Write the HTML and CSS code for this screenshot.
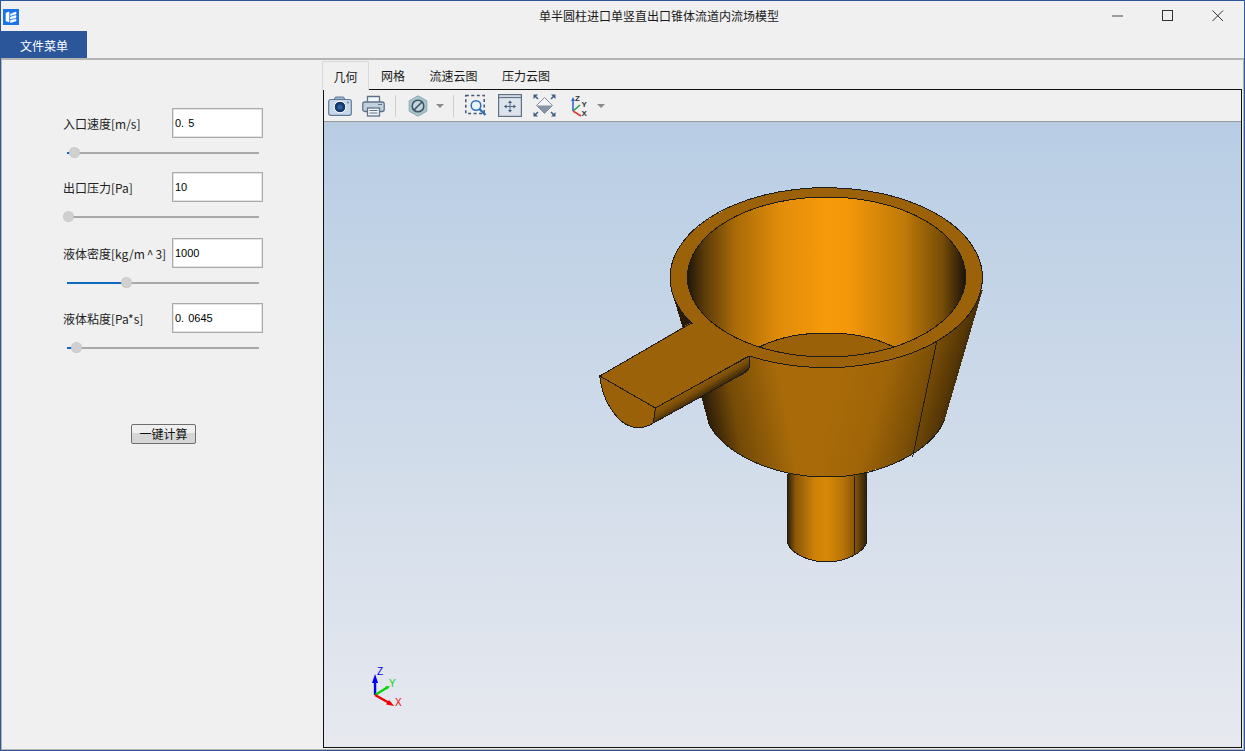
FILE: index.html
```html
<!DOCTYPE html>
<html lang="zh">
<head>
<meta charset="utf-8">
<title>单半圆柱进口单竖直出口锥体流道内流场模型</title>
<link rel="stylesheet" href="styles.css">
</head>
<body>
<div class="window">
  <header class="titlebar">
    <div class="app-icon">
      <svg width="16" height="16" viewBox="0 0 16 16">
        <rect width="16" height="16" fill="#1a73e8"/>
        <path d="M3 4v8M3 4l3-1v10l-3-1M7.500 5l5.500-2v2l-5.500 1.500zM7.500 8l5.500-1.500v2l-5.500 1.500zM7.500 11.500l5.500-1.500v2l-5.500 1.500z" fill="#fff" stroke="#fff" stroke-width=".6"/>
      </svg>
    </div>
    <div class="title">单半圆柱进口单竖直出口锥体流道内流场模型</div>
    <div class="win-controls">
      <button class="win-btn"><svg width="12" height="12" viewBox="0 0 12 12"><path d="M0 6h11" stroke="#777" stroke-width="1.400"/></svg></button>
      <button class="win-btn"><svg width="12" height="12" viewBox="0 0 12 12"><rect x=".5" y=".5" width="10" height="10" fill="none" stroke="#333"/></svg></button>
      <button class="win-btn"><svg width="12" height="12" viewBox="0 0 12 12"><path d="M.5 .5l10.500 10.500M11 .5L.5 11" stroke="#333" stroke-width="1"/></svg></button>
    </div>
  </header>
  <nav class="menubar"><div class="menu-item">文件菜单</div></nav>
  <main class="content">
    <aside class="side">
      <div class="form">
        <section class="field">
          <div class="field-row"><label class="field-label">入口速度[m/s]</label><input class="field-input wide" value="0. 5"></div>
          <div class="slider"><div class="fill" style="width:7px"></div><div class="knob" style="left:7px"></div></div>
        </section>
        <section class="field">
          <div class="field-row"><label class="field-label">出口压力[Pa]</label><input class="field-input" value="10"></div>
          <div class="slider"><div class="fill" style="width:0"></div><div class="knob" style="left:1px"></div></div>
        </section>
        <section class="field">
          <div class="field-row"><label class="field-label">液体密度[kg/m<span class="caret-char">^</span>3]</label><input class="field-input" value="1000"></div>
          <div class="slider"><div class="fill" style="width:59px"></div><div class="knob" style="left:59px"></div></div>
        </section>
        <section class="field">
          <div class="field-row"><label class="field-label">液体粘度[Pa*s]</label><input class="field-input wide" value="0. 0645"></div>
          <div class="slider"><div class="fill" style="width:9px"></div><div class="knob" style="left:9px"></div></div>
        </section>
      </div>
      <div class="action"><button class="run-btn">一键计算</button></div>
    </aside>
    <section class="workspace">
      <div class="tabs">
        <div class="tab active">几何</div>
        <div class="tab">网格</div>
        <div class="tab">流速云图</div>
        <div class="tab">压力云图</div>
      </div>
      <div class="viewer">
        <div class="toolbar">
          <svg class="tool" width="24" height="20" viewBox="0 0 24 20">
            <rect x=".7" y="3.500" width="22.600" height="15.800" rx="2" fill="#c9d8ea" stroke="#5c7a9c" stroke-width="1.200"/>
            <path d="M6 3.500l1.500-2.500h8l1.500 2.500z" fill="#9db4cd" stroke="#5c7a9c"/>
            <circle cx="12" cy="11" r="5.800" fill="#16386b" stroke="#fff" stroke-width="1"/>
            <circle cx="12" cy="11" r="2.600" fill="#2b5fa0"/>
            <circle cx="20" cy="6.500" r=".9" fill="#5c7a9c"/>
          </svg>
          <svg class="tool print" width="23" height="22" viewBox="0 0 23 22">
            <path d="M5.500 7V1.500h12V7" fill="#f4f7fa" stroke="#5f7186" stroke-width="1.300"/>
            <rect x=".8" y="7" width="21.400" height="9.500" rx="2" fill="#c3d0de" stroke="#5f7186" stroke-width="1.300"/>
            <rect x="5.500" y="13" width="12" height="8" fill="#f4f7fa" stroke="#5f7186" stroke-width="1.300"/>
            <path d="M7.500 15.500h8M7.500 18h8" stroke="#5f7186"/>
            <path d="M16 9.500h4" stroke="#5f7186"/>
          </svg>
          <span class="sep"></span>
          <svg class="tool hex" width="20" height="22" viewBox="0 0 20 22">
            <path d="M10 .8l8.800 5v10.400l-8.800 5-8.800-5V5.800z" fill="#a9c5c9" stroke="#8aa9ae"/>
            <circle cx="10" cy="11" r="5.800" fill="#c3d5da" stroke="#3c5468" stroke-width="1.600"/>
            <path d="M6 15l8-8" stroke="#3c5468" stroke-width="1.600"/>
          </svg>
          <span class="caret"></span>
          <span class="sep second"></span>
          <svg class="tool zoombox" width="22" height="23" viewBox="0 0 22 23">
            <rect x=".8" y="1.500" width="18.400" height="18" fill="none" stroke="#3f5877" stroke-width="1.500" stroke-dasharray="3 2.500"/>
            <circle cx="11" cy="11.500" r="4.800" fill="#eaf2fb" stroke="#2a6fb8" stroke-width="1.500"/>
            <path d="M14.500 15l6 6" stroke="#2a6fb8" stroke-width="2.200"/>
          </svg>
          <svg class="tool fit" width="24" height="23" viewBox="0 0 24 23">
            <rect x=".6" y=".6" width="22.800" height="21.800" fill="#dde3ea" stroke="#5f7186" stroke-width="1.200"/>
            <path d="M1 3.500h22" stroke="#5f7186" stroke-width="1.200"/>
            <path d="M12 8v9M7.500 12.500h9" stroke="#4d6a8b"/>
            <path d="M12 6.500l-2 2.500h4zM12 18.500l-2-2.500h4zM6 12.500l2.500-2v4zM18 12.500l-2.500-2v4z" fill="#3f5877"/>
          </svg>
          <svg class="tool diamond" width="23" height="23" viewBox="0 0 23 23">
            <path d="M11.500 3.500l8 8-8 8-8-8z" fill="#f3f5f8" stroke="#7d8ea1"/>
            <path d="M3.500 11.500h16l-8 8z" fill="#8795a6"/>
            <path d="M2 2l3 3M21 2l-3 3M2 21l3-3M21 21l-3-3" stroke="#3f5f88" stroke-width="1.500" fill="none"/>
            <path d="M.5 .5h4.500l-4.500 4.500zM22.500 .5h-4.500l4.500 4.500zM.5 22.500h4.500l-4.500-4.500zM22.500 22.500h-4.500l4.500-4.500z" fill="#3f5f88"/>
          </svg>
          <svg class="tool axes" width="22" height="23" viewBox="0 0 22 23">
            <path d="M3 17V6" stroke="#2f6dc8" stroke-width="1.600"/>
            <path d="M3 3l-2 4h4z" fill="#2f6dc8"/>
            <path d="M3 17l7-6" stroke="#1fa04a" stroke-width="1.600"/>
            <path d="M3 17l8 5" stroke="#e03a3a" stroke-width="1.600"/>
            <text x="5" y="7" class="axis-mini">Z</text>
            <text x="11.500" y="13" class="axis-mini">Y</text>
            <text x="11.500" y="22" class="axis-mini">X</text>
          </svg>
          <span class="caret last"></span>
        </div>
        <div class="canvas">
          <svg class="scene" viewBox="324 122 916 625" preserveAspectRatio="none">
            <defs>
              <linearGradient id="cavity" gradientUnits="userSpaceOnUse" x1="687" y1="0" x2="964" y2="0">
                <stop offset="0" stop-color="#1f160a"/>
                <stop offset=".06" stop-color="#5a3a08"/>
                <stop offset=".17" stop-color="#a86a08"/>
                <stop offset=".33" stop-color="#e08c0a"/>
                <stop offset=".5" stop-color="#f7990a"/>
                <stop offset=".58" stop-color="#f4970a"/>
                <stop offset=".78" stop-color="#c07a08"/>
                <stop offset=".92" stop-color="#774c06"/>
                <stop offset="1" stop-color="#1f160a"/>
              </linearGradient>
              <linearGradient id="coneL" gradientUnits="userSpaceOnUse" x1="703" y1="400" x2="780" y2="385">
                <stop offset="0" stop-color="#2b1c08"/>
                <stop offset=".35" stop-color="#734a07"/>
                <stop offset="1" stop-color="#a96b09"/>
              </linearGradient>
              <linearGradient id="coneR" gradientUnits="userSpaceOnUse" x1="840" y1="370" x2="963" y2="405">
                <stop offset="0" stop-color="#a96b09"/>
                <stop offset=".35" stop-color="#a06508"/>
                <stop offset=".65" stop-color="#7c4f06"/>
                <stop offset=".85" stop-color="#553606"/>
                <stop offset="1" stop-color="#1f160a"/>
              </linearGradient>
              <linearGradient id="pipe" gradientUnits="userSpaceOnUse" x1="787" y1="0" x2="866" y2="0">
                <stop offset="0" stop-color="#2d1f0a"/>
                <stop offset=".1" stop-color="#8a5708"/>
                <stop offset=".35" stop-color="#cf8208"/>
                <stop offset=".5" stop-color="#d88807"/>
                <stop offset=".7" stop-color="#b87407"/>
                <stop offset=".85" stop-color="#895607"/>
                <stop offset="1" stop-color="#2d1f0a"/>
              </linearGradient>
              <linearGradient id="handleSide" gradientUnits="userSpaceOnUse" x1="695" y1="382" x2="705" y2="399">
                <stop offset="0" stop-color="#9a6108"/>
                <stop offset=".45" stop-color="#7a4e08"/>
                <stop offset="1" stop-color="#1f160a"/>
              </linearGradient>
              <clipPath id="innerClip"><ellipse cx="826" cy="277" rx="139" ry="80"/></clipPath>
            </defs>

            <g class="solid" stroke="#1d1d1f" stroke-width="1">
              <path d="M787 470V543C790 553 808 562 826 562C845 562 862 553 866 543V470z" fill="url(#pipe)" stroke="none"/>
              <path d="M787 474V543C790 553 808 562 826 562C845 562 862 553 866 543V474" fill="none"/>
              <path d="M854 476V555" fill="none"/>
              <path d="M671 290L682 327L708 423C722 452 770 477 830 477V290z" fill="url(#coneL)" stroke="none"/>
              <path d="M822 290H982L944 420C930 452 880 477 822 477z" fill="url(#coneR)" stroke="none"/>
              <path d="M708 423C722 452 770 477 826 477C880 477 930 452 944 420" fill="none"/>
              <path d="M936 342L912 457" fill="none"/>
              <path d="M655 408L749 355V365C749 369 746 372 742 374L653 423z" fill="url(#handleSide)"/>
              <path d="M599.500 376C601 392 608 410 622 422C632 429 642 430 653 423L655 408z" fill="#9a6108"/>
              <ellipse cx="826" cy="278" rx="156" ry="90" fill="#9b6209" stroke="none"/>
              <path d="M691 322L599.500 376L655 408L749 355L760 345L700 310z" fill="#9b6209" stroke="none"/>
              <path d="M691 323L599.500 376L655 408L749 356" fill="none"/>
              <path d="M749 356A156 90 0 1 0 692 324" fill="none"/>
              <ellipse cx="826" cy="277" rx="139" ry="80" fill="url(#cavity)" stroke="none"/>
              <ellipse cx="826" cy="375" rx="90" ry="42" fill="#9a6108" clip-path="url(#innerClip)"/>
              <ellipse cx="826" cy="277" rx="139" ry="80" fill="none"/>
            </g>

            <path d="M375 695V679" stroke="#0000ee" stroke-width="2.400"/>
            <path d="M375 674l-3 9h6z" fill="#0000ee"/>
            <path d="M375 695L388 687" stroke="#10d010" stroke-width="2.400"/>
            <path d="M375 695L391 704" stroke="#ee0000" stroke-width="2.400"/>
            <path d="M394 706l-8-1.500 3-4.500z" fill="#ee0000"/>
            <path d="M390 686l-5 .5 2 3z" fill="#10d010"/>
            <text class="triad triad-z" x="377" y="675">Z</text>
            <text class="triad triad-y" x="389" y="687">Y</text>
            <text class="triad triad-x" x="395" y="706">X</text>
          </svg>
        </div>
      </div>
    </section>
  </main>
</div>
</body>
</html>
```

FILE: styles.css
```css
* { box-sizing: border-box; }
html, body { margin: 0; padding: 0; height: 100%; overflow: hidden; }
body {
  font-family: "Noto Sans CJK SC", "Liberation Sans", sans-serif;
  font-size: 12px;
  color: #1a1a1a;
  background: #f0f0f0;
}
.window {
  width: 1245px;
  height: 751px;
  border: 1px solid #2b579a;
  display: flex;
  flex-direction: column;
  background: #f0f0f0;
}
.titlebar {
  height: 30px;
  flex: none;
  display: flex;
  align-items: center;
  position: relative;
}
.app-icon { width: 16px; height: 16px; margin-left: 2px; margin-top: 1px; line-height: 0; }
.title {
  position: absolute;
  left: 538px;
  top: 6px;
  line-height: 18px;
  color: #1a1a1a;
  white-space: nowrap;
}
.win-controls { margin-left: auto; display: flex; padding-right: 1px; margin-top: -1px; }
.win-btn {
  width: 50px;
  height: 30px;
  border: 0;
  padding: 0;
  background: none;
  display: flex;
  align-items: center;
  justify-content: center;
}
.menubar { height: 27px; flex: none; display: flex; }
.menu-item {
  width: 86px;
  height: 27px;
  background: #2b579a;
  color: #fff;
  text-align: center;
  line-height: 30px;
}
.content {
  flex: 1;
  min-height: 0;
  display: flex;
  border: 1px solid #b4b4b4;
  border-top-width: 2px;
  background: #f0f0f0;
}
.side {
  width: 320px;
  flex: none;
  padding: 48px 0 0 61px;
}
.form {
  display: grid;
  grid-template-rows: 64px 66px 65px 64px;
  width: 200px;
}
.field-row {
  display: flex;
  align-items: center;
  height: 30px;
}
.field-label {
  width: 109px;
  flex: none;
  padding-top: 2px;
  line-height: 18px;
  color: #222;
  white-space: nowrap;
}
.caret-char { padding: 0 2px; }
.field-input {
  width: 91px;
  height: 30px;
  border: 1px solid #a9a9a9;
  box-shadow: inset 0 0 0 1px #e4e4e4;
  background: #fff;
  padding: 0 2px;
  font-family: "Liberation Sans", sans-serif;
  font-size: 11px;
  color: #000;
  outline: none;
  border-radius: 0;
}
.field-input.wide { word-spacing: 1px; }
.slider {
  position: relative;
  width: 192px;
  height: 2px;
  margin: 14px 0 0 4px;
  background: #a9a9a9;
}
.fill { height: 2px; background: #0f69bd; }
.knob {
  position: absolute;
  top: -5px;
  width: 11px;
  height: 11px;
  margin-left: -5px;
  border-radius: 50%;
  background: #d0d0d0;
  border: 1px dotted #c0c0c0;
}
.action { padding-left: 68px; margin-top: 57px; }
.run-btn {
  width: 65px;
  height: 20px;
  padding: 0;
  border: 1px solid #6e6e6e;
  border-radius: 2px;
  background: linear-gradient(#efefef 0, #efefef 45%, #d6d6d6 45%, #d6d6d6 100%);
  font-family: inherit;
  font-size: 12px;
  line-height: 16px;
  color: #111;
}
.workspace {
  flex: 1;
  min-width: 0;
  display: flex;
  flex-direction: column;
  padding: 1px 1px 0 0;
}
.tabs {
  display: flex;
  height: 28px;
  flex: none;
}
.tab {
  line-height: 30px;
  padding: 0 12.500px 0 12px;
  color: #1a1a1a;
  white-space: nowrap;
}
.tab.active {
  position: relative;
  z-index: 1;
  width: 47px;
  height: 29px;
  padding: 0;
  text-align: center;
  border: 1px solid #d9d9d9;
  border-bottom: 0;
  background: #f0f0f0;
  line-height: 29px;
}
.viewer {
  flex: 1;
  min-height: 0;
  margin: 0 0 1px 1px;
  border: 1px solid #111;
  display: flex;
  flex-direction: column;
}
.toolbar {
  height: 32px;
  flex: none;
  display: flex;
  align-items: center;
  background: #f0f0f0;
  border-bottom: 1px solid #9a9a9a;
  padding-left: 4px;
}
.tool { flex: none; display: block; }
.print { margin-left: 10px; }
.sep { width: 1px; height: 22px; background: #cfcfcf; margin-left: 10px; flex: none; }
.hex { margin-left: 12px; }
.caret {
  width: 0; height: 0;
  border-left: 4px solid transparent;
  border-right: 4px solid transparent;
  border-top: 4px solid #8a8a8a;
  margin-left: 8px;
  flex: none;
}
.sep.second { margin-left: 9px; }
.zoombox { margin-left: 11px; }
.fit { margin-left: 11px; }
.diamond { margin-left: 11px; }
.axes { margin-left: 14px; }
.caret.last { margin-left: 5px; }
.axis-mini { font: 700 8px "Liberation Sans", sans-serif; fill: #333; }
.canvas {
  flex: 1;
  min-height: 0;
  background: linear-gradient(#b8cde4, #e7e9ef);
}
.scene { display: block; width: 100%; height: 100%; }
.solid { shape-rendering: crispEdges; }
.triad { font: 10px "Liberation Sans", sans-serif; }
.triad-z { fill: #0000ee; }
.triad-y { fill: #10d010; }
.triad-x { fill: #ee0000; }
```
